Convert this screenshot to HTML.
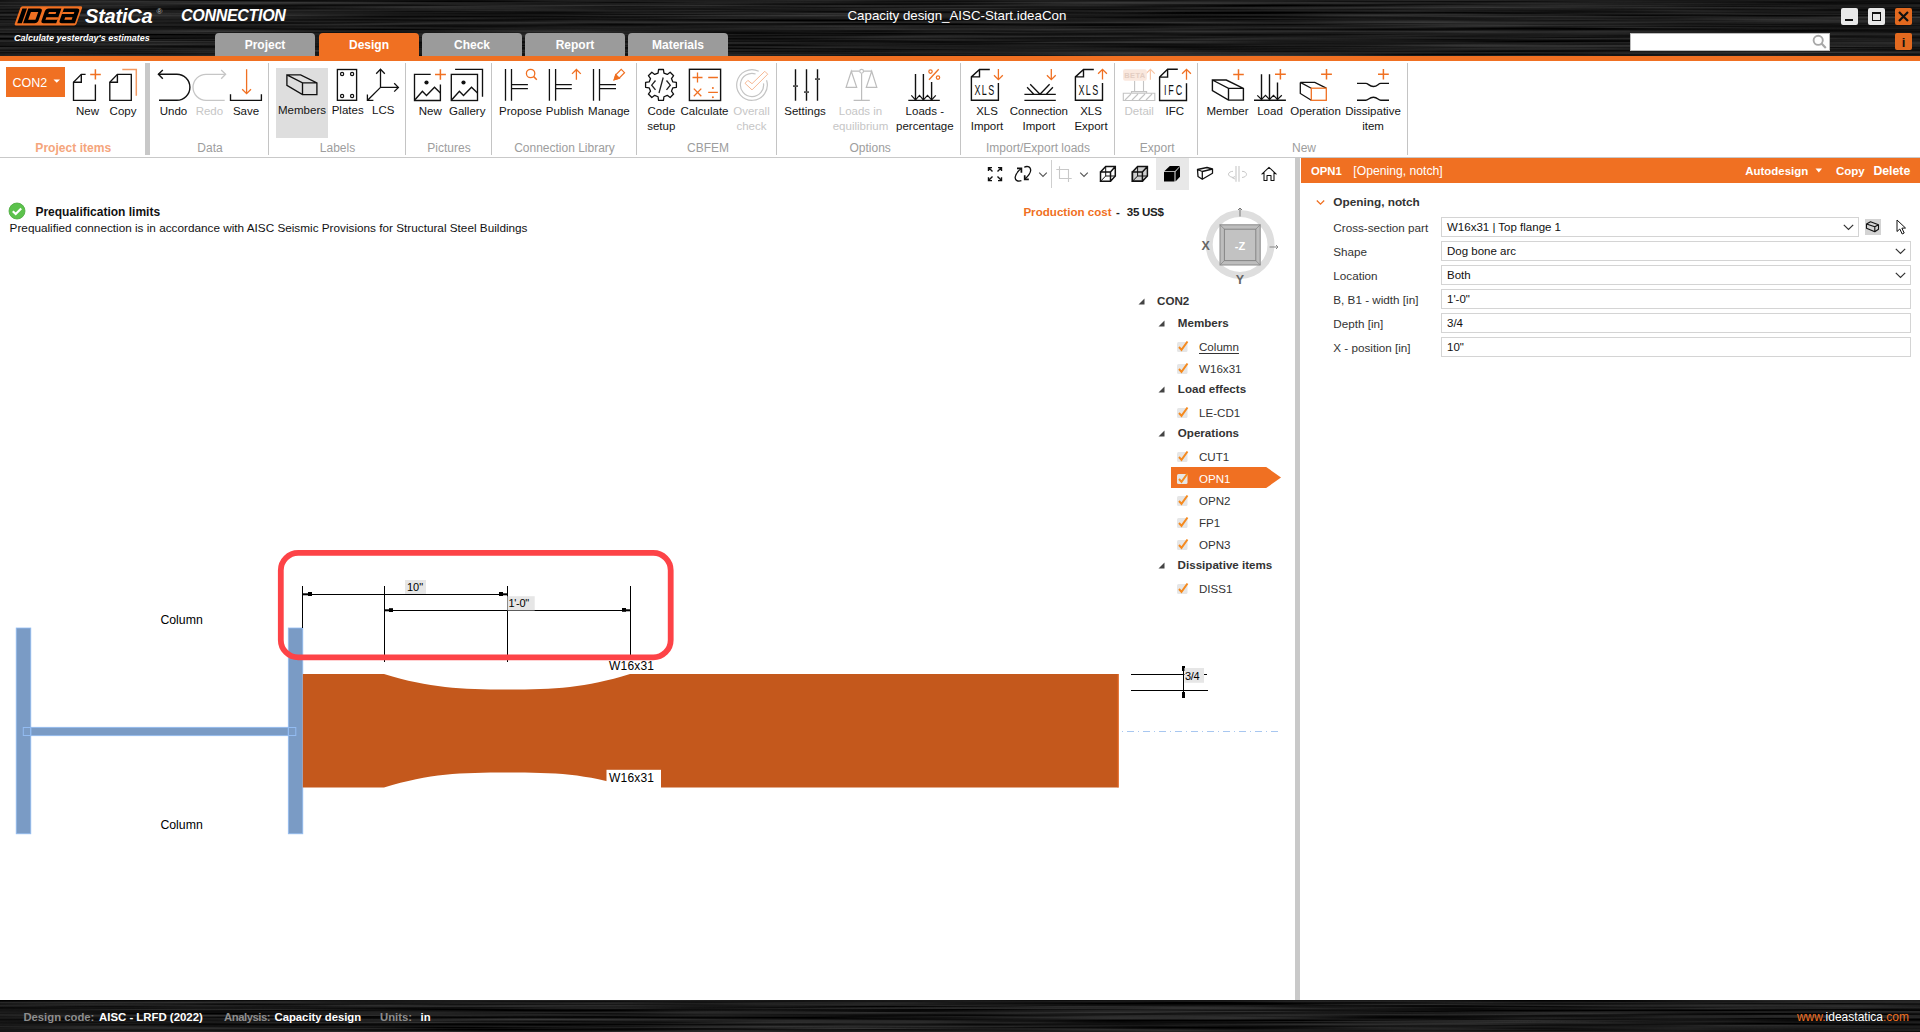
<!DOCTYPE html><html><head><meta charset="utf-8"><style>
html,body{margin:0;padding:0;width:1920px;height:1032px;overflow:hidden;background:#fff;}
body{position:relative;font-family:"Liberation Sans",sans-serif;}
.t{position:absolute;white-space:nowrap;font-family:"Liberation Sans",sans-serif;}
svg{overflow:visible}
</style></head><body>
<svg style="position:absolute;left:0;top:0px" width="1920" height="56" viewBox="0 0 1920 56"><filter id="br3" color-interpolation-filters="sRGB" x="0" y="0" width="1920" height="56" filterUnits="userSpaceOnUse"><feTurbulence type="fractalNoise" baseFrequency="0.003 0.42" numOctaves="3" seed="3"/><feColorMatrix type="matrix" values="0.34 0 0 0 -0.065  0.34 0 0 0 -0.065  0.34 0 0 0 -0.065  0 0 0 0 1"/></filter><rect width="1920" height="56" fill="#111"/><rect width="1920" height="56" filter="url(#br3)"/></svg>
<div style="position:absolute;left:0px;top:56px;width:1920px;height:5px;background:#f07022"></div>
<svg style="position:absolute;left:0;top:0" width="100" height="40" viewBox="0 0 100 40"><g transform="translate(14.1,25.6) skewX(-19.4)">
<rect x="0" y="-19.3" width="61.8" height="19.3" rx="1.8" fill="#f07022"/>
<rect x="2.3" y="-17" width="4.6" height="14.7" fill="#000"/>
<path d="M8.2 -17 H19.6 Q22.6 -17 22.6 -14 V-5.3 Q22.6 -2.3 19.6 -2.3 H8.2 Z" fill="#000"/>
<path d="M12 -13.7 H19.3 V-5.8 H12 Z" fill="#f07022"/>
<path d="M28.7 -17 H41.3 V-2.3 H28.7 Q25.7 -2.3 25.7 -5.3 V-14 Q25.7 -17 28.7 -17 Z" fill="#000"/>
<path d="M30.1 -13.5 H37.4 V-11.6 H30.1 Z M29.3 -8.3 H41.4 V-5.8 H29.3 Z" fill="#f07022"/>
<path d="M43.8 -17 H57 Q60 -17 60 -14 V-2.3 H46.8 Q43.8 -2.3 43.8 -5.3 V-8.3 H43.8 Z" fill="#000"/>
<path d="M43.7 -13.5 H55.5 V-11.6 H43.7 Z M48.2 -8.3 H55.5 V-5.8 H48.2 Z" fill="#f07022"/>
</g></svg>
<div class="t" style="left:85px;top:6.00px;font-size:20px;line-height:20px;font-weight:700;color:#fff;font-style:italic;letter-spacing:-0.2px">StatiCa</div>
<div class="t" style="left:156.5px;top:8.00px;font-size:8px;line-height:8px;font-weight:400;color:#bbb;">®</div>
<div class="t" style="left:181px;top:8.00px;font-size:16px;line-height:16px;font-weight:700;color:#fff;font-style:italic;letter-spacing:-0.3px">CONNECTION</div>
<div class="t" style="left:14px;top:34.00px;font-size:9px;line-height:9px;font-weight:700;color:#fff;font-style:italic">Calculate yesterday&#x27;s estimates</div>
<div class="t" style="left:847.5px;top:9.00px;font-size:13.3px;line-height:13.3px;font-weight:400;color:#fff;">Capacity design_AISC-Start.ideaCon</div>
<div style="position:absolute;left:1841px;top:8px;width:17px;height:17px;background:#e8e8e8;border-radius:2px"></div>
<div style="position:absolute;left:1845px;top:19px;width:8px;height:2px;background:#111"></div>
<div style="position:absolute;left:1868px;top:8px;width:17px;height:17px;background:#e8e8e8;border-radius:2px"></div>
<div style="position:absolute;left:1872px;top:12px;width:9px;height:9px;border:1.5px solid #111;box-sizing:border-box;border-top-width:2px"></div>
<div style="position:absolute;left:1895px;top:8px;width:17px;height:17px;background:#e2691f;border-radius:2px"></div>
<svg style="position:absolute;left:1895px;top:8px;" width="17" height="17" viewBox="0 0 17 17"><path d="M4 4 L13 13 M13 4 L4 13" stroke="#111" stroke-width="2.2"/></svg>
<div style="position:absolute;left:1630px;top:33px;width:200px;height:18px;background:#fff;border:1px solid #bbb;box-sizing:border-box"></div>
<svg style="position:absolute;left:1811px;top:34px;" width="16" height="16" viewBox="0 0 16 16"><circle cx="7.2" cy="6.3" r="4.6" fill="none" stroke="#a8a8a8" stroke-width="1.9"/><path d="M10.5 9.6 L14.8 14" stroke="#a8a8a8" stroke-width="2.2"/></svg>
<div style="position:absolute;left:1895px;top:33px;width:17px;height:17px;background:#e2691f;border-radius:2px"></div>
<div class="t" style="left:1903.5px;transform:translateX(-50%);top:36.00px;font-size:13px;line-height:13px;font-weight:700;color:#111;">i</div>
<div style="position:absolute;left:215px;top:33px;width:100px;height:23px;background:#9b9b9b;border-radius:4px 4px 0 0"></div>
<div class="t" style="left:265px;transform:translateX(-50%);top:39.00px;font-size:12px;line-height:12px;font-weight:700;color:#fff;">Project</div>
<div style="position:absolute;left:319px;top:33px;width:100px;height:23px;background:#f07022;border-radius:4px 4px 0 0"></div>
<div class="t" style="left:369px;transform:translateX(-50%);top:39.00px;font-size:12px;line-height:12px;font-weight:700;color:#fff;">Design</div>
<div style="position:absolute;left:422px;top:33px;width:100px;height:23px;background:#9b9b9b;border-radius:4px 4px 0 0"></div>
<div class="t" style="left:472px;transform:translateX(-50%);top:39.00px;font-size:12px;line-height:12px;font-weight:700;color:#fff;">Check</div>
<div style="position:absolute;left:525px;top:33px;width:100px;height:23px;background:#9b9b9b;border-radius:4px 4px 0 0"></div>
<div class="t" style="left:575px;transform:translateX(-50%);top:39.00px;font-size:12px;line-height:12px;font-weight:700;color:#fff;">Report</div>
<div style="position:absolute;left:628px;top:33px;width:100px;height:23px;background:#9b9b9b;border-radius:4px 4px 0 0"></div>
<div class="t" style="left:678px;transform:translateX(-50%);top:39.00px;font-size:12px;line-height:12px;font-weight:700;color:#fff;">Materials</div>
<div style="position:absolute;left:0px;top:157px;width:1920px;height:1px;background:#c9c9c9"></div>
<div style="position:absolute;left:145px;top:63px;width:5px;height:92px;background:#c8c8c8"></div>
<div style="position:absolute;left:268px;top:63px;width:1px;height:92px;background:#c4c4c4"></div>
<div style="position:absolute;left:405px;top:63px;width:1px;height:92px;background:#c4c4c4"></div>
<div style="position:absolute;left:491px;top:63px;width:1px;height:92px;background:#c4c4c4"></div>
<div style="position:absolute;left:636px;top:63px;width:1px;height:92px;background:#c4c4c4"></div>
<div style="position:absolute;left:776px;top:63px;width:1px;height:92px;background:#c4c4c4"></div>
<div style="position:absolute;left:960px;top:63px;width:1px;height:92px;background:#c4c4c4"></div>
<div style="position:absolute;left:1114px;top:63px;width:1px;height:92px;background:#c4c4c4"></div>
<div style="position:absolute;left:1197px;top:63px;width:1px;height:92px;background:#c4c4c4"></div>
<div style="position:absolute;left:1407px;top:63px;width:1px;height:92px;background:#c4c4c4"></div>
<div style="position:absolute;left:276px;top:68px;width:52px;height:70px;background:#dedede"></div>
<div style="position:absolute;left:6px;top:67px;width:59px;height:30px;background:#f07022"></div>
<div class="t" style="left:12.5px;top:77.00px;font-size:12.5px;line-height:12.5px;font-weight:400;color:#fff;">CON2</div>
<svg style="position:absolute;left:52px;top:78px;" width="10" height="6" viewBox="0 0 10 6"><path d="M1.5 1.5 L8 1.5 L4.75 4.8 Z" fill="#fff"/></svg>
<div class="t" style="left:87.5px;transform:translateX(-50%);top:106.00px;font-size:11.5px;line-height:11.5px;font-weight:400;color:#151515;">New</div>
<div class="t" style="left:123px;transform:translateX(-50%);top:106.00px;font-size:11.5px;line-height:11.5px;font-weight:400;color:#151515;">Copy</div>
<div class="t" style="left:173.5px;transform:translateX(-50%);top:106.00px;font-size:11.5px;line-height:11.5px;font-weight:400;color:#151515;">Undo</div>
<div class="t" style="left:209.4px;transform:translateX(-50%);top:106.00px;font-size:11.5px;line-height:11.5px;font-weight:400;color:#c6c6c6;">Redo</div>
<div class="t" style="left:246px;transform:translateX(-50%);top:106.00px;font-size:11.5px;line-height:11.5px;font-weight:400;color:#151515;">Save</div>
<div class="t" style="left:302px;transform:translateX(-50%);top:105.00px;font-size:11.5px;line-height:11.5px;font-weight:400;color:#151515;">Members</div>
<div class="t" style="left:347.7px;transform:translateX(-50%);top:105.00px;font-size:11.5px;line-height:11.5px;font-weight:400;color:#151515;">Plates</div>
<div class="t" style="left:383.3px;transform:translateX(-50%);top:105.00px;font-size:11.5px;line-height:11.5px;font-weight:400;color:#151515;">LCS</div>
<div class="t" style="left:430.2px;transform:translateX(-50%);top:106.00px;font-size:11.5px;line-height:11.5px;font-weight:400;color:#151515;">New</div>
<div class="t" style="left:467.2px;transform:translateX(-50%);top:106.00px;font-size:11.5px;line-height:11.5px;font-weight:400;color:#151515;">Gallery</div>
<div class="t" style="left:520.5px;transform:translateX(-50%);top:106.00px;font-size:11.5px;line-height:11.5px;font-weight:400;color:#151515;">Propose</div>
<div class="t" style="left:564.7px;transform:translateX(-50%);top:106.00px;font-size:11.5px;line-height:11.5px;font-weight:400;color:#151515;">Publish</div>
<div class="t" style="left:608.9px;transform:translateX(-50%);top:106.00px;font-size:11.5px;line-height:11.5px;font-weight:400;color:#151515;">Manage</div>
<div class="t" style="left:661.3px;transform:translateX(-50%);top:106.00px;font-size:11.5px;line-height:11.5px;font-weight:400;color:#151515;">Code</div>
<div class="t" style="left:661.3px;transform:translateX(-50%);top:121.00px;font-size:11.5px;line-height:11.5px;font-weight:400;color:#151515;">setup</div>
<div class="t" style="left:704.5px;transform:translateX(-50%);top:106.00px;font-size:11.5px;line-height:11.5px;font-weight:400;color:#151515;">Calculate</div>
<div class="t" style="left:751.5px;transform:translateX(-50%);top:106.00px;font-size:11.5px;line-height:11.5px;font-weight:400;color:#c6c6c6;">Overall</div>
<div class="t" style="left:751.5px;transform:translateX(-50%);top:121.00px;font-size:11.5px;line-height:11.5px;font-weight:400;color:#c6c6c6;">check</div>
<div class="t" style="left:805px;transform:translateX(-50%);top:106.00px;font-size:11.5px;line-height:11.5px;font-weight:400;color:#151515;">Settings</div>
<div class="t" style="left:860.5px;transform:translateX(-50%);top:106.00px;font-size:11.5px;line-height:11.5px;font-weight:400;color:#c6c6c6;">Loads in</div>
<div class="t" style="left:860.5px;transform:translateX(-50%);top:121.00px;font-size:11.5px;line-height:11.5px;font-weight:400;color:#c6c6c6;">equilibrium</div>
<div class="t" style="left:924.8px;transform:translateX(-50%);top:106.00px;font-size:11.5px;line-height:11.5px;font-weight:400;color:#151515;">Loads -</div>
<div class="t" style="left:924.8px;transform:translateX(-50%);top:121.00px;font-size:11.5px;line-height:11.5px;font-weight:400;color:#151515;">percentage</div>
<div class="t" style="left:987px;transform:translateX(-50%);top:106.00px;font-size:11.5px;line-height:11.5px;font-weight:400;color:#151515;">XLS</div>
<div class="t" style="left:987px;transform:translateX(-50%);top:121.00px;font-size:11.5px;line-height:11.5px;font-weight:400;color:#151515;">Import</div>
<div class="t" style="left:1038.9px;transform:translateX(-50%);top:106.00px;font-size:11.5px;line-height:11.5px;font-weight:400;color:#151515;">Connection</div>
<div class="t" style="left:1038.9px;transform:translateX(-50%);top:121.00px;font-size:11.5px;line-height:11.5px;font-weight:400;color:#151515;">Import</div>
<div class="t" style="left:1091px;transform:translateX(-50%);top:106.00px;font-size:11.5px;line-height:11.5px;font-weight:400;color:#151515;">XLS</div>
<div class="t" style="left:1091px;transform:translateX(-50%);top:121.00px;font-size:11.5px;line-height:11.5px;font-weight:400;color:#151515;">Export</div>
<div class="t" style="left:1139.2px;transform:translateX(-50%);top:106.00px;font-size:11.5px;line-height:11.5px;font-weight:400;color:#c6c6c6;">Detail</div>
<div class="t" style="left:1174.8px;transform:translateX(-50%);top:106.00px;font-size:11.5px;line-height:11.5px;font-weight:400;color:#151515;">IFC</div>
<div class="t" style="left:1227.5px;transform:translateX(-50%);top:106.00px;font-size:11.5px;line-height:11.5px;font-weight:400;color:#151515;">Member</div>
<div class="t" style="left:1270px;transform:translateX(-50%);top:106.00px;font-size:11.5px;line-height:11.5px;font-weight:400;color:#151515;">Load</div>
<div class="t" style="left:1315.6px;transform:translateX(-50%);top:106.00px;font-size:11.5px;line-height:11.5px;font-weight:400;color:#151515;">Operation</div>
<div class="t" style="left:1373px;transform:translateX(-50%);top:106.00px;font-size:11.5px;line-height:11.5px;font-weight:400;color:#151515;">Dissipative</div>
<div class="t" style="left:1373px;transform:translateX(-50%);top:121.00px;font-size:11.5px;line-height:11.5px;font-weight:400;color:#151515;">item</div>
<div class="t" style="left:73.3px;transform:translateX(-50%);top:142.00px;font-size:12.1px;line-height:12.1px;font-weight:700;color:#f5a57c;">Project items</div>
<div class="t" style="left:210px;transform:translateX(-50%);top:142.00px;font-size:12px;line-height:12px;font-weight:400;color:#9d9d9d;">Data</div>
<div class="t" style="left:337.5px;transform:translateX(-50%);top:142.00px;font-size:12px;line-height:12px;font-weight:400;color:#9d9d9d;">Labels</div>
<div class="t" style="left:449px;transform:translateX(-50%);top:142.00px;font-size:12px;line-height:12px;font-weight:400;color:#9d9d9d;">Pictures</div>
<div class="t" style="left:564.5px;transform:translateX(-50%);top:142.00px;font-size:12px;line-height:12px;font-weight:400;color:#9d9d9d;">Connection Library</div>
<div class="t" style="left:708px;transform:translateX(-50%);top:142.00px;font-size:12px;line-height:12px;font-weight:400;color:#9d9d9d;">CBFEM</div>
<div class="t" style="left:870.2px;transform:translateX(-50%);top:142.00px;font-size:12px;line-height:12px;font-weight:400;color:#9d9d9d;">Options</div>
<div class="t" style="left:1038px;transform:translateX(-50%);top:142.00px;font-size:12px;line-height:12px;font-weight:400;color:#9d9d9d;">Import/Export loads</div>
<div class="t" style="left:1157.2px;transform:translateX(-50%);top:142.00px;font-size:12px;line-height:12px;font-weight:400;color:#9d9d9d;">Export</div>
<div class="t" style="left:1304px;transform:translateX(-50%);top:142.00px;font-size:12px;line-height:12px;font-weight:400;color:#9d9d9d;">New</div>
<svg style="position:absolute;left:0;top:0" width="1920" height="160" viewBox="0 0 1920 160">
<g fill="none" stroke-linecap="butt" stroke-linejoin="miter" stroke="#111" stroke-width="1.35">
 <!-- New -->
 <path d="M95.4 84.4 V100.3 H73.5 V82.3 L81.3 74.4 H85.6"/>
 <path d="M81.3 74.4 V82.3 H73.5" stroke-width="1.4"/>
 <!-- Copy -->
 <path d="M109.8 82.3 L117.4 74.4 H131.3 V100.3 H109.8 Z"/>
 <path d="M117.4 74.4 V82.3 H109.8" stroke-width="1.4"/>
 <!-- Undo -->
 <path d="M158.3 74.3 H176.9 A13 13 0 0 1 176.9 100.3 H159" stroke-width="1.4"/>
 <path d="M162.8 70 L158.4 74.3 L162.8 78.7" stroke-width="1.4"/>
 <!-- Save tray -->
 <path d="M230.5 94.3 V100.3 H261.4 V94.3"/>
 <!-- Members box -->
 <path d="M286.9 74.9 H300.6 L316.9 82.8 V94.6 H302.5 L286.9 85.3 Z M286.9 74.9 L302.5 82.8 H316.9 M302.5 82.8 V94.6"/>
 <!-- Plates -->
 <rect x="337.4" y="69.5" width="19.2" height="30.8"/>
 <g stroke-width="1.2"><circle cx="342.1" cy="74" r="1.6"/><circle cx="352.1" cy="74" r="1.6"/><circle cx="342.1" cy="96" r="1.6"/><circle cx="352.1" cy="96" r="1.6"/></g>
 <!-- LCS -->
 <path d="M380.5 87.4 V69.3 M376.2 73.7 L380.5 69.3 L384.8 73.7 M380.5 87.4 H398.4 M394.2 83.2 L398.4 87.4 L394.2 91.6 M380.5 87.4 L367.6 100.2 M367.4 94.6 V100.3 H373.4" stroke-width="1.3"/>
 <!-- Picture new -->
 <path d="M440.4 84.4 V100.5 H414.5 V74.4 H430.7"/>
 <path d="M415 99.8 L422.4 91.3 L426.5 95.5 L434.5 87.3 L440.4 93" stroke-width="1.4"/>
 <!-- Gallery -->
 <rect x="451.3" y="74.4" width="26.2" height="26.1"/>
 <path d="M455.1 69.4 H482.5 V96.7"/>
 <path d="M451.8 99.8 L459.4 91.3 L463.5 95.5 L471.5 87.3 L477.5 93" stroke-width="1.4"/>
 <!-- Connection library -->
 <path d="M505.5 69.1 V100.8 M511.5 69.1 V100.8 M511.5 84.6 H527.9 M511.5 88.6 H527.9" stroke-width="1.3"/>
 <path d="M549.4 69.1 V100.8 M555.6 69.1 V100.8 M555.6 84.6 H571.8 M555.6 88.6 H571.8" stroke-width="1.3"/>
 <path d="M593.5 69.1 V100.8 M599.5 69.1 V100.8 M599.5 84.6 H616 M599.5 88.6 H616" stroke-width="1.3"/>
 <!-- Calculator -->
 <rect x="689.4" y="69.3" width="31.2" height="31.2" stroke-width="1.4"/>
 <!-- Settings -->
 <path d="M795.5 69.2 V100.8 M806.5 69.2 V100.8 M817.5 69.2 V100.8" stroke-width="1.4"/>
 <!-- loads percentage -->
 <path d="M915.5 74.1 V99.8 M923.4 74.1 V99.8 M931.6 82.1 V99.8 M908.3 100.4 H939.8" stroke-width="1.4"/>
 <path d="M911.3 95.4 L915.5 99.8 L919.5 95.4 L923.4 99.8 L927.5 95.4 L931.6 99.8 L935.8 95.4" stroke-width="1.2"/>
 <!-- XLS import page -->
 <path d="M998.4 83.1 V100.3 H971.4 V76.9 L979.5 69.5 H989.8 M979.5 69.5 V76.9 H971.4" stroke-width="1.4"/>
 <!-- Connection import -->
 <path d="M1024.4 94.3 H1055.8 M1024.4 100.3 H1055.8 M1030.2 84.3 L1040 94.3 L1049.6 84.3 M1027.1 87.3 L1033.8 94.3 M1046.3 94.3 L1052.9 87.3" stroke-width="1.3"/>
 <!-- XLS export page -->
 <path d="M1102.5 83.1 V100.3 H1075.4 V76.9 L1083.5 69.5 H1093.8 M1083.5 69.5 V76.9 H1075.4" stroke-width="1.4"/>
 <!-- IFC page -->
 <path d="M1186.5 83.3 V100.5 H1159.6 V77.1 L1167.6 69.3 H1177.8 M1167.6 69.3 V77.1 H1159.6" stroke-width="1.4"/>
 <!-- Member box -->
 <path d="M1212.4 80 H1226.3 L1243.4 88.4 V100.1 H1228.5 L1212.4 90.6 Z M1212.4 80 L1228.5 88.4 H1243.4 M1228.5 88.4 V100.1" stroke-width="1.4"/>
 <!-- Load -->
 <path d="M1261.5 74.2 V99.5 M1269.5 74.2 V99.5 M1277.5 82.4 V99.5 M1254 100.3 H1285.9" stroke-width="1.4"/>
 <path d="M1257.3 95.3 L1261.5 99.5 L1265.5 95.3 L1269.5 99.5 L1273.5 95.3 L1277.5 99.5 L1281.8 95.3" stroke-width="1.2"/>
 <!-- Operation -->
 <path d="M1311.3 88.2 L1300.3 82.4 H1314.8 L1326.3 88.2 M1300.3 82.4 V93.5 L1311.3 100.3" stroke-width="1.3"/>
 <!-- Dissipative -->
 <path d="M1357 83.4 H1365.8 C1368.5 83.4 1369 86.5 1373.4 86.5 C1377.8 86.5 1378 83.4 1380.8 83.4 H1389 M1357 100.3 H1365.8 C1368.5 100.3 1369 97.2 1373.4 97.2 C1377.8 97.2 1378 100.3 1380.8 100.3 H1389" stroke-width="1.4"/>
</g>
<g fill="none" stroke-linecap="butt" stroke-linejoin="miter" stroke="#f07022" stroke-width="1.5">
 <path d="M90.2 74.4 H100.8 M95.4 69.2 V79.6"/>
 <path d="M122.3 69.4 H136.3 V95.7" stroke="#f39a63"/>
 <path d="M246.6 69.3 V93.7 M242.2 89.3 L246.6 93.7 L251 89.3" stroke-width="1.3"/>
 <path d="M435 74.4 H445.9 M440.4 69.2 V79.8"/>
 <circle cx="530.6" cy="73.5" r="4.2" stroke-width="1.3"/><path d="M533.7 76.6 L536.8 79.7" stroke-width="1.5"/>
 <path d="M576.4 69.5 V79.7 M572 73.9 L576.4 69.5 L580.8 73.9" stroke-width="1.3"/>
 <path d="M614.3 79.6 L615.8 74.8 L621.2 69.4 L624.5 72.7 L619.1 78.1 Z" stroke-width="1.2"/><path d="M614.3 79.6 L615.8 74.8 L619.1 78.1 Z" fill="#f07022"/>
 <path d="M692.5 77.5 H702.5 M697.5 72.5 V82.5 M708.2 77.5 H717.9 M708.2 92.4 H717.9 M693.8 88.6 L701.3 96.2 M701.3 88.6 L693.8 96.2" stroke-width="1.3"/>
 <circle cx="712.9" cy="87.9" r="1" fill="#f07022" stroke="none"/><circle cx="712.9" cy="97.2" r="1" fill="#f07022" stroke="none"/>
 <path d="M929 79.8 L938.7 69.3" stroke-width="1.3"/><circle cx="930.5" cy="71.6" r="1.7" stroke-width="1.2"/><circle cx="938" cy="77.6" r="1.7" stroke-width="1.2"/>
 <path d="M998.4 69.1 V79.6 M994 75.2 L998.4 79.6 L1002.8 75.2" stroke-width="1.3"/>
 <path d="M1051.3 69.1 V79.6 M1046.9 75.2 L1051.3 79.6 L1055.7 75.2" stroke-width="1.3"/>
 <path d="M1102.5 79.6 V69.3 M1098.1 73.7 L1102.5 69.3 L1106.9 73.7" stroke-width="1.3"/>
 <path d="M1186.5 79.7 V69.3 M1182.1 73.7 L1186.5 69.3 L1190.9 73.7" stroke-width="1.3"/>
 <path d="M1233.2 74.6 H1243.8 M1238.5 69.3 V79.9"/>
 <path d="M1275 74.3 H1285.8 M1280.4 69 V79.6"/>
 <path d="M1321.1 74.3 H1331.9 M1326.5 69 V79.6"/>
 <path d="M1378 74.3 H1388.8 M1383.4 69 V79.6"/>
 <rect x="1311.3" y="88.2" width="15" height="12.1" stroke-width="1.3"/>
 <path d="M1150.4 79.7 V69.3 M1146 73.7 L1150.4 69.3 L1154.8 73.7" stroke="#f8c6a6" stroke-width="1.2"/>
</g>
<g fill="none" stroke="#c6c6c6" stroke-width="1.3">
 <path d="M225.6 74.3 H206 A13 13 0 0 0 206 100.3 H224.7"/>
 <path d="M221.2 70 L225.6 74.3 L221.2 78.7"/>
 <path d="M766.55 80.27 A15.3 15.3 0 1 1 758.71 71.25" stroke="#c4c4c4" stroke-width="1.2"/>
 <path d="M763.49 83.39 A11.6 11.6 0 1 1 755.58 73.97" stroke="#c4c4c4" stroke-width="1.2"/>
 <path d="M745 83.3 L747.9 80.4 L752 83.7 L764.8 71.3 L767.7 74.2 L752 89.9 Z" stroke="#f6b894" stroke-width="1"/>
 <path d="M861.6 73.5 V100.3 M853.6 100.3 H869.8 M851.3 71.2 H859.5 M863.7 71.2 H871.7 M851.3 71.2 L846.1 87.3 H856.7 Z M871.7 71.2 L866.3 87.3 H876.8 Z" stroke="#bdbdbd" stroke-width="1.2"/>
 <circle cx="861.6" cy="71.3" r="1.9" stroke="#bdbdbd" stroke-width="1.1"/>
 <path d="M1134.6 80.8 V91.6 M1143.5 80.8 V91.6 M1131.5 91.6 H1146.6 V93.2 H1131.5 Z M1123.3 93.2 H1154.8 V100.5 H1123.3 Z M1125 100 L1131 94 M1132 100 L1138 94 M1139 100 L1145 94 M1146 100 L1152 94" stroke="#c3c3c3" stroke-width="1.1"/>
</g>
<rect x="1123.1" y="69.3" width="23.7" height="11.5" rx="2" fill="#fae8de"/>
<g fill="#111">
 <rect x="793" y="85.2" width="5" height="1.8" fill="#555"/>
 <rect x="804" y="91.2" width="5" height="1.8" fill="#555"/>
 <rect x="815" y="78.2" width="5" height="1.8" fill="#555"/>
 <circle cx="426.5" cy="82.5" r="2.1"/><circle cx="463.5" cy="82.5" r="2.1"/>
</g>
</svg>
<div class="t" style="left:1134.9px;transform:translateX(-50%);top:72.00px;font-size:7.5px;line-height:7.5px;font-weight:700;color:#e3cdc2;letter-spacing:0.3px">BETA</div>
<div class="t" style="left:984.9px;transform:translateX(-50%);top:83.00px;font-size:14.5px;line-height:14.5px;font-weight:400;color:#111;transform:translateX(-50%) scaleX(0.62);letter-spacing:2.2px">XLS</div>
<div class="t" style="left:1089px;transform:translateX(-50%);top:83.00px;font-size:14.5px;line-height:14.5px;font-weight:400;color:#111;transform:translateX(-50%) scaleX(0.62);letter-spacing:2.2px">XLS</div>
<div class="t" style="left:1174.4px;transform:translateX(-50%);top:83.00px;font-size:14.5px;line-height:14.5px;font-weight:400;color:#111;transform:translateX(-50%) scaleX(0.62);letter-spacing:3px">IFC</div>
<svg style="position:absolute;left:0px;top:0px;left:0;top:0" width="1920" height="160" viewBox="0 0 1920 160"><path d="M672.84 81.96 L676.41 82.46 L676.41 87.34 L672.84 87.84 L671.45 91.19 L673.62 94.07 L670.17 97.52 L667.29 95.35 L663.94 96.74 L663.44 100.31 L658.56 100.31 L658.06 96.74 L654.71 95.35 L651.83 97.52 L648.38 94.07 L650.55 91.19 L649.16 87.84 L645.59 87.34 L645.59 82.46 L649.16 81.96 L650.55 78.61 L648.38 75.73 L651.83 72.28 L654.71 74.45 L658.06 73.06 L658.56 69.49 L663.44 69.49 L663.94 73.06 L667.29 74.45 L670.17 72.28 L673.62 75.73 L671.45 78.61 Z" fill="none" stroke="#111" stroke-width="1.3" stroke-linejoin="round"/><path d="M655.5 80.5 L651.7 85.2 L655.5 89.9 M666.5 80.5 L670.3 85.2 L666.5 89.9 M663.2 77.5 L659 93" fill="none" stroke="#222" stroke-width="1.3"/></svg>
<div style="position:absolute;left:1156px;top:158px;width:33px;height:32px;background:#e8e8e8"></div>
<div style="position:absolute;left:1051px;top:160px;width:1px;height:28px;background:#cfcfcf"></div>
<svg style="position:absolute;left:0px;top:0px;" width="1920" height="200" viewBox="0 0 1920 200">
<g fill="none" stroke="#111" stroke-width="1.4">
 <path d="M988.5 171 V167.6 H992 M988.5 167.6 L992.5 171.6 M1001.5 171 V167.6 H998 M1001.5 167.6 L997.5 171.6 M988.5 177.2 V180.6 H992 M988.5 180.6 L992.5 176.6 M1001.5 177.2 V180.6 H998 M1001.5 180.6 L997.5 176.6"/>
 <path d="M1021.4 180.6 C1018 181.8 1014.8 180.5 1015.2 177 C1015.8 173.5 1018.5 170.8 1021.2 168.6" stroke-width="1.3"/>
 <path d="M1017 168.4 H1021.4 V172.7" stroke-width="1.7"/>
 <path d="M1024.2 167.3 C1026.5 166 1030.5 166 1030.7 170.3 C1030.5 173.5 1027.5 176.8 1024.9 179.1" stroke-width="1.3"/>
 <path d="M1024.7 175.3 V179.3 H1028.8" stroke-width="1.7"/>
 <path d="M1039.2 172.6 L1043 176.4 L1046.8 172.6" stroke="#555" stroke-width="1.1"/>
 <path d="M1080.2 172.6 L1084 176.4 L1087.8 172.6" stroke="#555" stroke-width="1.1"/>
 <path d="M1059.5 166.3 V178.5 H1071.7 M1056.3 169.5 H1068.5 V181.9" stroke="#c8c8c8" stroke-width="1.1"/>
 <!-- cube wire -->
 <path d="M1100.5 172 H1110.5 V181.3 H1100.5 Z M1100.5 172 L1105.7 166.5 H1115.3 V176 L1110.5 181.3 M1110.5 172 L1115.3 166.5" stroke-width="1.5"/>
 <path d="M1105.7 166.5 V176 H1115.3 M1105.7 176 L1100.5 181.3" stroke-width="1"/>
 <!-- cube gray -->
 <path d="M1132.4 172 H1142.4 V181.3 H1132.4 Z" fill="#d0d0d0"/>
 <path d="M1132.4 172 L1137.6 166.5 H1147.4 V176 L1142.4 181.3 Z" fill="#d0d0d0" stroke="none"/>
 <path d="M1132.4 172 H1142.4 V181.3 H1132.4 Z M1132.4 172 L1137.6 166.5 H1147.4 V176 L1142.4 181.3 M1142.4 172 L1147.4 166.5" stroke-width="1.5"/>
 <path d="M1137.6 166.5 V176 H1147.4 M1137.6 176 L1132.4 181.3" stroke-width="1"/>
 <!-- beam -->
 <path d="M1197.5 169.5 L1207 167.5 L1212.5 169 V173.2 L1202.3 179.3 L1198 176.5 Z M1197.5 169.5 L1202.3 171.5 L1212.5 169 M1202.3 171.5 V179.3" stroke-width="1.3" stroke-linejoin="round"/>
 <!-- mirror disabled -->
 <path d="M1236 166 V181.8 M1239 166 V181.8" stroke="#c8c8c8" stroke-width="1.1"/>
 <path d="M1233 177.5 C1226 176 1228 171.5 1233 171.3 M1242 171.3 C1248 171.5 1248 177 1242 177.5 M1235 176.5 L1232.5 177.8 L1235 179" stroke="#c8c8c8" stroke-width="1"/>
 <!-- home -->
 <path d="M1261.6 174.3 L1269 167.3 L1276.5 174.3 M1264 172.2 V180.5 H1267 V175.5 H1271 V180.5 H1274 V172.2" stroke-width="1.05" stroke-linejoin="round"/>
</g>
<path d="M1164 172 H1174.5 V181.5 H1164 Z" fill="#000"/>
<path d="M1164.3 171.3 L1169.8 166 H1180 L1174.8 171.3 Z" fill="#000"/>
<path d="M1175.5 171.8 L1180 166.8 V176.8 L1175.5 181.5 Z" fill="#000"/>
</svg>
<svg style="position:absolute;left:8px;top:202px;" width="18" height="18" viewBox="0 0 18 18"><circle cx="9" cy="9" r="8" fill="#5cc24c"/><circle cx="9" cy="9" r="8" fill="none" stroke="#4aa93c" stroke-width="0.8"/><path d="M4.8 9.2 L7.7 12 L13.2 6.5" fill="none" stroke="#fff" stroke-width="2.2"/></svg>
<div class="t" style="left:35.4px;top:206.00px;font-size:12px;line-height:12px;font-weight:700;color:#111;">Prequalification limits</div>
<div class="t" style="left:9.6px;top:222.00px;font-size:11.75px;line-height:11.75px;font-weight:400;color:#111;">Prequalified connection is in accordance with AISC Seismic Provisions for Structural Steel Buildings</div>
<div class="t" style="left:1023.4px;top:206.00px;font-size:11.6px;line-height:11.6px;font-weight:700;color:#f07022;">Production cost</div>
<div class="t" style="left:1116px;top:206.00px;font-size:11.6px;line-height:11.6px;font-weight:700;color:#222;">-</div>
<div class="t" style="left:1126.8px;top:206.00px;font-size:11.6px;line-height:11.6px;font-weight:700;color:#222;letter-spacing:-0.3px">35 US$</div>
<svg style="position:absolute;left:1190px;top:200px;" width="100" height="90" viewBox="0 0 100 90">
<circle cx="50.1" cy="44.5" r="30.9" fill="none" stroke="#dedede" stroke-width="7"/>
<rect x="30" y="24.8" width="40.2" height="40.2" fill="#bdbdbd" stroke="#8a8a8a" stroke-width="1"/>
<rect x="34.4" y="29.2" width="31.4" height="31.4" fill="#c2c2c2" stroke="#858585" stroke-width="1"/>
<path d="M30 24.8 L34.4 29.2 M70.2 24.8 L65.8 29.2 M30 65 L34.4 60.6 M70.2 65 L65.8 60.6" stroke="#8a8a8a" stroke-width="0.8"/>
<path d="M50 16.5 V8 M48 10 L50 8 L52 10" stroke="#777" stroke-width="1" fill="none"/>
<path d="M79.5 47 H88 M86 45 L88 47 L86 49" stroke="#888" stroke-width="1" fill="none"/>
</svg>
<div class="t" style="left:1240px;transform:translateX(-50%);top:241.00px;font-size:11px;line-height:11px;font-weight:700;color:#fff;">-Z</div>
<div class="t" style="left:1205.7px;transform:translateX(-50%);top:240.00px;font-size:12.5px;line-height:12.5px;font-weight:700;color:#666;">X</div>
<div class="t" style="left:1240px;transform:translateX(-50%);top:274.00px;font-size:12.5px;line-height:12.5px;font-weight:700;color:#666;">Y</div>
<svg style="position:absolute;left:1138px;top:298px" width="8" height="8" viewBox="0 0 8 8"><path d="M6.5 0.5 V6.5 H0.5 Z" fill="#444"/></svg>
<div class="t" style="left:1157.1px;top:295.00px;font-size:11.6px;line-height:11.6px;font-weight:700;color:#333;">CON2</div>
<svg style="position:absolute;left:1158px;top:320px" width="8" height="8" viewBox="0 0 8 8"><path d="M6.5 0.5 V6.5 H0.5 Z" fill="#444"/></svg>
<div class="t" style="left:1177.8px;top:317.00px;font-size:11.6px;line-height:11.6px;font-weight:700;color:#333;">Members</div>
<svg style="position:absolute;left:1177px;top:338.5px" width="14" height="14" viewBox="0 0 14 14"><rect x="0" y="3" width="10.5" height="10" rx="1.5" fill="#e6e6e6"/><path d="M2 8 L4.5 10.8 L10.5 2.5" fill="none" stroke="#f58a1f" stroke-width="2"/></svg>
<div class="t" style="left:1199px;top:341.00px;font-size:11.6px;line-height:11.6px;font-weight:400;color:#333;text-decoration:underline;text-underline-offset:1.5px">Column</div>
<svg style="position:absolute;left:1177px;top:360.5px" width="14" height="14" viewBox="0 0 14 14"><rect x="0" y="3" width="10.5" height="10" rx="1.5" fill="#e6e6e6"/><path d="M2 8 L4.5 10.8 L10.5 2.5" fill="none" stroke="#f58a1f" stroke-width="2"/></svg>
<div class="t" style="left:1199px;top:363.00px;font-size:11.6px;line-height:11.6px;font-weight:400;color:#333;">W16x31</div>
<svg style="position:absolute;left:1158px;top:386px" width="8" height="8" viewBox="0 0 8 8"><path d="M6.5 0.5 V6.5 H0.5 Z" fill="#444"/></svg>
<div class="t" style="left:1177.8px;top:383.00px;font-size:11.6px;line-height:11.6px;font-weight:700;color:#333;">Load effects</div>
<svg style="position:absolute;left:1177px;top:404.5px" width="14" height="14" viewBox="0 0 14 14"><rect x="0" y="3" width="10.5" height="10" rx="1.5" fill="#e6e6e6"/><path d="M2 8 L4.5 10.8 L10.5 2.5" fill="none" stroke="#f58a1f" stroke-width="2"/></svg>
<div class="t" style="left:1199px;top:407.00px;font-size:11.6px;line-height:11.6px;font-weight:400;color:#333;">LE-CD1</div>
<svg style="position:absolute;left:1158px;top:430px" width="8" height="8" viewBox="0 0 8 8"><path d="M6.5 0.5 V6.5 H0.5 Z" fill="#444"/></svg>
<div class="t" style="left:1177.8px;top:427.00px;font-size:11.6px;line-height:11.6px;font-weight:700;color:#333;">Operations</div>
<svg style="position:absolute;left:1177px;top:448.5px" width="14" height="14" viewBox="0 0 14 14"><rect x="0" y="3" width="10.5" height="10" rx="1.5" fill="#e6e6e6"/><path d="M2 8 L4.5 10.8 L10.5 2.5" fill="none" stroke="#f58a1f" stroke-width="2"/></svg>
<div class="t" style="left:1199px;top:451.00px;font-size:11.6px;line-height:11.6px;font-weight:400;color:#333;">CUT1</div>
<svg style="position:absolute;left:1171px;top:467px;" width="111" height="21" viewBox="0 0 111 21"><path d="M0 0 H95.2 L110 10.5 L95.2 21 H0 Z" fill="#f07022"/></svg>
<svg style="position:absolute;left:1177px;top:470.5px" width="14" height="14" viewBox="0 0 14 14"><rect x="0" y="3" width="10.5" height="10" rx="1.5" fill="#e6e6e6"/><path d="M2 8 L4.5 10.8 L10.5 2.5" fill="none" stroke="#f58a1f" stroke-width="2"/></svg>
<div class="t" style="left:1199px;top:473.00px;font-size:11.6px;line-height:11.6px;font-weight:400;color:#fff;">OPN1</div>
<svg style="position:absolute;left:1177px;top:492.5px" width="14" height="14" viewBox="0 0 14 14"><rect x="0" y="3" width="10.5" height="10" rx="1.5" fill="#e6e6e6"/><path d="M2 8 L4.5 10.8 L10.5 2.5" fill="none" stroke="#f58a1f" stroke-width="2"/></svg>
<div class="t" style="left:1199px;top:495.00px;font-size:11.6px;line-height:11.6px;font-weight:400;color:#333;">OPN2</div>
<svg style="position:absolute;left:1177px;top:514.5px" width="14" height="14" viewBox="0 0 14 14"><rect x="0" y="3" width="10.5" height="10" rx="1.5" fill="#e6e6e6"/><path d="M2 8 L4.5 10.8 L10.5 2.5" fill="none" stroke="#f58a1f" stroke-width="2"/></svg>
<div class="t" style="left:1199px;top:517.00px;font-size:11.6px;line-height:11.6px;font-weight:400;color:#333;">FP1</div>
<svg style="position:absolute;left:1177px;top:536.5px" width="14" height="14" viewBox="0 0 14 14"><rect x="0" y="3" width="10.5" height="10" rx="1.5" fill="#e6e6e6"/><path d="M2 8 L4.5 10.8 L10.5 2.5" fill="none" stroke="#f58a1f" stroke-width="2"/></svg>
<div class="t" style="left:1199px;top:539.00px;font-size:11.6px;line-height:11.6px;font-weight:400;color:#333;">OPN3</div>
<svg style="position:absolute;left:1158px;top:562px" width="8" height="8" viewBox="0 0 8 8"><path d="M6.5 0.5 V6.5 H0.5 Z" fill="#444"/></svg>
<div class="t" style="left:1177.6px;top:559.00px;font-size:11.6px;line-height:11.6px;font-weight:700;color:#333;">Dissipative items</div>
<svg style="position:absolute;left:1177px;top:580.5px" width="14" height="14" viewBox="0 0 14 14"><rect x="0" y="3" width="10.5" height="10" rx="1.5" fill="#e6e6e6"/><path d="M2 8 L4.5 10.8 L10.5 2.5" fill="none" stroke="#f58a1f" stroke-width="2"/></svg>
<div class="t" style="left:1199px;top:583.00px;font-size:11.6px;line-height:11.6px;font-weight:400;color:#333;">DISS1</div>
<svg style="position:absolute;left:0px;top:0px;" width="1300" height="900" viewBox="0 0 1300 900">
<rect x="16.2" y="628" width="14.6" height="205.8" fill="#7a9bc5" stroke="#93bcf2" stroke-width="0.8"/>
<rect x="288.3" y="628" width="14.5" height="205.8" fill="#7a9bc5" stroke="#93bcf2" stroke-width="0.8"/>
<rect x="30.8" y="727.3" width="257.5" height="8.4" fill="#7a9bc5" stroke="#93bcf2" stroke-width="0.8"/>
<rect x="23.3" y="727.5" width="7.5" height="8" fill="none" stroke="#93bcf2" stroke-width="1"/>
<rect x="288.3" y="727.5" width="7.5" height="8" fill="none" stroke="#93bcf2" stroke-width="1"/>
<path d="M302.8 674 H384 C430 688 460 689.5 507.4 689.5 C555 689.5 585 688 630 674 H1118.6 V787.5 H630 C585 773.5 555 772.5 507.4 772.5 C460 772.5 430 773.5 384 787.5 H302.8 Z" fill="#c4581c"/>
<path d="M1118.1 674 V787.5" stroke="#e8651f" stroke-width="1"/>
<g stroke="#000" stroke-width="1" fill="none" shape-rendering="crispEdges">
 <path d="M302.5 586 V628 M384.5 586 V662 M507.5 586 V662 M630.5 586 V658"/>
 <path d="M302.5 594.5 H507.5 M384.5 610.5 H630.5"/>
 <path d="M1131 674.5 H1207 M1131 690.5 H1208 M1183.5 666 V698"/>
</g>
<g fill="#000">
 <rect x="308" y="592" width="4" height="4"/><rect x="499" y="592" width="4" height="4"/>
 <rect x="389" y="608.2" width="4" height="3.8"/><rect x="622" y="608" width="4" height="3.8"/>
 <rect x="302.5" y="593.3" width="6" height="2"/><rect x="502" y="593.3" width="5.5" height="2"/>
 <rect x="384.5" y="609.3" width="5" height="2"/><rect x="625.5" y="609.3" width="5" height="2"/>
 <rect x="1182" y="666" width="3" height="5"/><rect x="1182" y="692" width="3" height="6"/>
</g>
<rect x="405" y="580" width="21" height="14" fill="#e6e6e6"/>
<rect x="507.4" y="596.2" width="27.3" height="14.2" fill="#e6e6e6"/>
<rect x="1184.4" y="668" width="19.6" height="14.8" fill="#e6e6e6"/>
<rect x="606" y="658" width="54" height="15" fill="#fff"/>
<rect x="606.5" y="769.8" width="54.5" height="18.5" fill="#fff"/>
<path d="M1122 731.5 H1278" stroke="#a8c7f0" stroke-width="1" stroke-dasharray="1 4 7 4"/>
<rect x="280.8" y="552.8" width="389.9" height="104.6" rx="17.5" ry="17.5" fill="none" stroke="#fd4347" stroke-width="5.8"/>
</svg>
<div class="t" style="left:160.4px;top:614.00px;font-size:12.3px;line-height:12.3px;font-weight:400;color:#000;">Column</div>
<div class="t" style="left:160.4px;top:819.00px;font-size:12.3px;line-height:12.3px;font-weight:400;color:#000;">Column</div>
<div class="t" style="left:609px;top:660.00px;font-size:12px;line-height:12px;font-weight:400;color:#000;letter-spacing:0.2px">W16x31</div>
<div class="t" style="left:609px;top:772.00px;font-size:12px;line-height:12px;font-weight:400;color:#000;letter-spacing:0.2px">W16x31</div>
<div class="t" style="left:407px;top:582.00px;font-size:11px;line-height:11px;font-weight:400;color:#000;">10&quot;</div>
<div class="t" style="left:508.5px;top:598.00px;font-size:11px;line-height:11px;font-weight:400;color:#000;letter-spacing:-0.3px">1&#x27;-0&quot;</div>
<div class="t" style="left:1185px;top:671.00px;font-size:11px;line-height:11px;font-weight:400;color:#000;letter-spacing:-0.3px">3/4</div>
<div style="position:absolute;left:1295px;top:158px;width:5px;height:842px;background:#c9c9c9"></div>
<div style="position:absolute;left:1301px;top:158px;width:619px;height:25px;background:#f07022"></div>
<div class="t" style="left:1311px;top:166.00px;font-size:11.3px;line-height:11.3px;font-weight:700;color:#fff;">OPN1</div>
<div class="t" style="left:1353.3px;top:165.00px;font-size:12.2px;line-height:12.2px;font-weight:400;color:#fff;">[Opening, notch]</div>
<div class="t" style="left:1745.3px;top:166.00px;font-size:11.45px;line-height:11.45px;font-weight:700;color:#fff;">Autodesign</div>
<svg style="position:absolute;left:1815px;top:168px;" width="8" height="6" viewBox="0 0 8 6"><path d="M0.5 0.5 H7 L3.75 4.5 Z" fill="#fff"/></svg>
<div class="t" style="left:1836px;top:166.00px;font-size:11.5px;line-height:11.5px;font-weight:700;color:#fff;">Copy</div>
<div class="t" style="left:1873.4px;top:165.00px;font-size:12.3px;line-height:12.3px;font-weight:700;color:#fff;">Delete</div>
<svg style="position:absolute;left:1316px;top:199px;" width="10" height="8" viewBox="0 0 10 8"><path d="M0.8 1.5 L4.5 5.2 L8.2 1.5" fill="none" stroke="#f07022" stroke-width="1.3"/></svg>
<div class="t" style="left:1333.3px;top:197.00px;font-size:11.8px;line-height:11.8px;font-weight:700;color:#333;">Opening, notch</div>
<div class="t" style="left:1333.3px;top:222.00px;font-size:11.7px;line-height:11.7px;font-weight:400;color:#333;">Cross-section part</div>
<div style="position:absolute;left:1441px;top:217.3px;width:417.5px;height:20px;border:1px solid #d4d4d4;box-sizing:border-box;background:#fff"></div>
<div class="t" style="left:1447px;top:222.00px;font-size:11.5px;line-height:11.5px;font-weight:400;color:#111;">W16x31 | Top flange 1</div>
<svg style="position:absolute;left:1843.0px;top:224.3px" width="11" height="7" viewBox="0 0 11 7"><path d="M0.8 0.8 L5.5 5.5 L10.2 0.8" fill="none" stroke="#333" stroke-width="1.2"/></svg>
<div class="t" style="left:1333.3px;top:246.00px;font-size:11.7px;line-height:11.7px;font-weight:400;color:#333;">Shape</div>
<div style="position:absolute;left:1441px;top:241.3px;width:469.5px;height:20px;border:1px solid #d4d4d4;box-sizing:border-box;background:#fff"></div>
<div class="t" style="left:1447px;top:246.00px;font-size:11.5px;line-height:11.5px;font-weight:400;color:#111;">Dog bone arc</div>
<svg style="position:absolute;left:1895.0px;top:248.3px" width="11" height="7" viewBox="0 0 11 7"><path d="M0.8 0.8 L5.5 5.5 L10.2 0.8" fill="none" stroke="#333" stroke-width="1.2"/></svg>
<div class="t" style="left:1333.3px;top:270.00px;font-size:11.7px;line-height:11.7px;font-weight:400;color:#333;">Location</div>
<div style="position:absolute;left:1441px;top:265.3px;width:469.5px;height:20px;border:1px solid #d4d4d4;box-sizing:border-box;background:#fff"></div>
<div class="t" style="left:1447px;top:270.00px;font-size:11.5px;line-height:11.5px;font-weight:400;color:#111;">Both</div>
<svg style="position:absolute;left:1895.0px;top:272.3px" width="11" height="7" viewBox="0 0 11 7"><path d="M0.8 0.8 L5.5 5.5 L10.2 0.8" fill="none" stroke="#333" stroke-width="1.2"/></svg>
<div class="t" style="left:1333.3px;top:294.00px;font-size:11.7px;line-height:11.7px;font-weight:400;color:#333;">B, B1 - width [in]</div>
<div style="position:absolute;left:1441px;top:289.3px;width:469.5px;height:20px;border:1px solid #d4d4d4;box-sizing:border-box;background:#fff"></div>
<div class="t" style="left:1447px;top:294.00px;font-size:11.5px;line-height:11.5px;font-weight:400;color:#111;">1&#x27;-0&quot;</div>
<div class="t" style="left:1333.3px;top:318.00px;font-size:11.7px;line-height:11.7px;font-weight:400;color:#333;">Depth [in]</div>
<div style="position:absolute;left:1441px;top:313.3px;width:469.5px;height:20px;border:1px solid #d4d4d4;box-sizing:border-box;background:#fff"></div>
<div class="t" style="left:1447px;top:318.00px;font-size:11.5px;line-height:11.5px;font-weight:400;color:#111;">3/4</div>
<div class="t" style="left:1333.3px;top:342.00px;font-size:11.7px;line-height:11.7px;font-weight:400;color:#333;">X - position [in]</div>
<div style="position:absolute;left:1441px;top:337.3px;width:469.5px;height:20px;border:1px solid #d4d4d4;box-sizing:border-box;background:#fff"></div>
<div class="t" style="left:1447px;top:342.00px;font-size:11.5px;line-height:11.5px;font-weight:400;color:#111;">10&quot;</div>
<div style="position:absolute;left:1865px;top:219px;width:16px;height:15.5px;background:#d3d3d3"></div>
<svg style="position:absolute;left:1865px;top:219px;" width="16" height="16" viewBox="0 0 16 16"><path d="M1.5 5 L5.5 2.8 L13.5 5.8 V10.3 L9.8 12.8 L1.5 9.2 Z M1.5 5 L9.8 7.8 L13.5 5.8 M9.8 7.8 V12.8" fill="none" stroke="#111" stroke-width="1.1" stroke-linejoin="round"/></svg>
<svg style="position:absolute;left:1896px;top:219px;" width="12" height="17" viewBox="0 0 12 17"><path d="M1 1 V12.5 L3.8 10 L6.2 15 L8.2 14 L5.9 9.2 L9.5 9 Z" fill="#fff" stroke="#111" stroke-width="1"/></svg>
<svg style="position:absolute;left:0;top:1000px" width="1920" height="32" viewBox="0 0 1920 32"><filter id="br9" color-interpolation-filters="sRGB" x="0" y="0" width="1920" height="32" filterUnits="userSpaceOnUse"><feTurbulence type="fractalNoise" baseFrequency="0.003 0.42" numOctaves="3" seed="9"/><feColorMatrix type="matrix" values="0.34 0 0 0 -0.075  0.34 0 0 0 -0.075  0.34 0 0 0 -0.075  0 0 0 0 1"/></filter><rect width="1920" height="32" fill="#111"/><rect width="1920" height="32" filter="url(#br9)"/></svg>
<div class="t" style="left:23.4px;top:1012.00px;font-size:11.3px;line-height:11.3px;font-weight:700;color:#8d8d8d;">Design code:</div>
<div class="t" style="left:99px;top:1012.00px;font-size:11.4px;line-height:11.4px;font-weight:700;color:#fff;">AISC - LRFD (2022)</div>
<div class="t" style="left:224px;top:1012.00px;font-size:11.3px;line-height:11.3px;font-weight:700;color:#8d8d8d;letter-spacing:-0.45px">Analysis:</div>
<div class="t" style="left:274.5px;top:1012.00px;font-size:11.3px;line-height:11.3px;font-weight:700;color:#fff;">Capacity design</div>
<div class="t" style="left:380px;top:1012.00px;font-size:11.3px;line-height:11.3px;font-weight:700;color:#8d8d8d;">Units:</div>
<div class="t" style="left:420.5px;top:1012.00px;font-size:11.3px;line-height:11.3px;font-weight:700;color:#fff;">in</div>
<div class="t" style="right:11px;top:1011.3px;font-size:12px;line-height:12px;color:#fff"><span style="color:#f07022">www.</span>ideastatica<span style="color:#f07022">.com</span></div>
</body></html>
